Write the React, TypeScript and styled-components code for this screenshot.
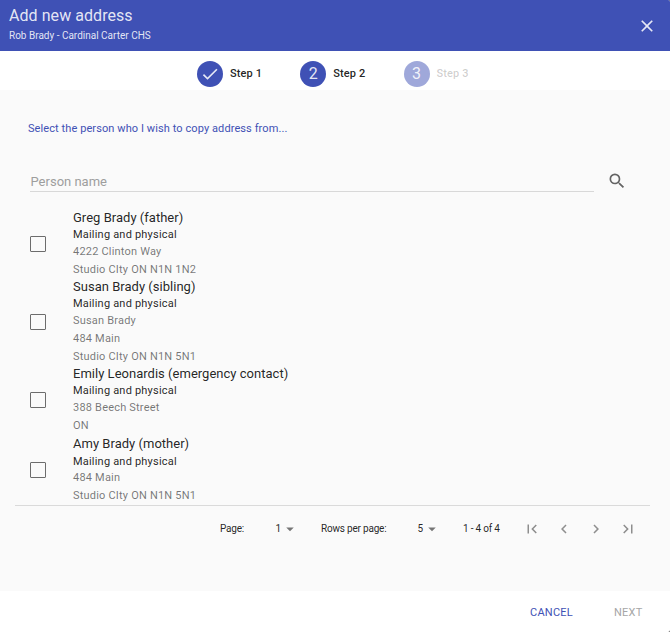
import React from "react";
import styled, { createGlobalStyle } from "styled-components";
import {
  MdArrowDropDown,
  MdCheck,
  MdChevronLeft,
  MdChevronRight,
  MdClose,
  MdFirstPage,
  MdLastPage,
  MdSearch,
} from "react-icons/md";

const indigo = "#3f51b5";

const GlobalStyle = createGlobalStyle`
  * { box-sizing: border-box; }
  body { margin: 0; background: #555; font-family: Roboto, sans-serif; color: rgba(0, 0, 0, 0.87); }
  button { font: inherit; letter-spacing: inherit; background: none; border: 0; padding: 0; color: inherit; }
  svg { display: block; flex: none; }
`;

const Dialog = styled.div`
  width: 670px;
  height: 632px;
  display: flex;
  flex-direction: column;
  overflow: hidden;
  background: #fff;
  border-radius: 0 2px 2px 0;
`;

const Header = styled.header`
  height: 51px;
  background: ${indigo};
  color: rgba(255, 255, 255, 0.87);
  display: flex;
  justify-content: space-between;
  align-items: center;
  padding: 0 13px 0 9px;
`;

const Titles = styled.div`
  height: 51px;
  padding-top: 6px;
`;

const Title = styled.h1`
  margin: 0;
  font-size: 16px;
  line-height: 20px;
  font-weight: 400;
  letter-spacing: 0.06px;
`;

const Subtitle = styled.div`
  margin-top: 3px;
  font-size: 10px;
  line-height: 13px;
`;

const CloseButton = styled.button`
  color: rgba(255, 255, 255, 0.87);
`;

const Steps = styled.nav`
  height: 39px;
  display: flex;
  align-items: center;
  padding: 6px 0 0 197px;
`;

const Step = styled.div<{ $muted?: boolean }>`
  width: 103.3px;
  display: flex;
  align-items: center;
  gap: 7px;
  font-size: 11px;
  font-weight: 500;
  letter-spacing: 0.1px;
  color: ${(p) => (p.$muted ? "rgba(0,0,0,0.2)" : "rgba(0,0,0,0.87)")};
`;

const StepBadge = styled.span<{ $muted?: boolean }>`
  width: 26px;
  height: 26px;
  border-radius: 50%;
  display: flex;
  align-items: center;
  justify-content: center;
  background: ${(p) => (p.$muted ? "#9fa8da" : indigo)};
  color: rgba(255, 255, 255, 0.87);
  font-size: 16px;
  font-weight: 400;
`;

const Content = styled.main`
  height: 501px;
  background: #fafafa;
  padding: 31px 20px 0 15px;
`;

const Prompt = styled.p`
  margin: 0 0 0 13px;
  font-size: 11px;
  line-height: 16px;
  letter-spacing: 0.09px;
  color: ${indigo};
`;

const SearchRow = styled.div`
  margin: 33px 23px 0 15px;
  display: flex;
  align-items: center;
  gap: 13px;
  color: rgba(0, 0, 0, 0.6);
`;

const SearchField = styled.input`
  flex: 1;
  height: 22px;
  padding: 2px 0 0 0.5px;
  border: 0;
  border-bottom: 1px solid #d8d8d8;
  background: none;
  outline: 0;
  font: 400 13px/19px Roboto, sans-serif;
  letter-spacing: 0;
  &::placeholder { color: #9e9e9e; }
`;

const People = styled.div`
  padding-top: 17px;
  height: 314px;
  border-bottom: 1px solid #dadada;
`;

const Name = styled.div`
  font-size: 13px;
  line-height: 17px;
  letter-spacing: 0.02px;
`;

const AddressKind = styled.div`
  font-size: 11px;
  line-height: 17px;
  letter-spacing: 0.2px;
`;

const AddressLine = styled.div`
  font-size: 11px;
  line-height: 17px;
  letter-spacing: 0.2px;
  color: rgba(0, 0, 0, 0.54);
  & + & { margin-top: 1px; }
`;

const Person = styled.label`
  display: flex;
  align-items: center;
  gap: 27px;
  padding-left: 15px;
  &:last-child { margin-top: 1px; }
  &:last-child ${AddressKind} { padding-top: 1px; margin-bottom: -1px; }
`;

const Checkbox = styled.input`
  appearance: none;
  width: 16px;
  height: 16px;
  margin: 0;
  border: 1px solid #6c6c6c;
  border-radius: 1px;
`;

const Pager = styled.div`
  height: 45px;
  display: flex;
  align-items: center;
  padding-left: 205px;
  font-size: 10px;
  letter-spacing: -0.2px;
`;

const PagerLabel = styled.span<{ $width: number }>`
  width: ${(p) => p.$width}px;
  white-space: nowrap;
`;

const PagerSelect = styled.button<{ $width: number }>`
  width: ${(p) => p.$width}px;
  display: flex;
  align-items: center;
  svg { color: #757575; }
`;

const PageButtons = styled.div`
  display: flex;
  gap: 14px;
  color: #8e8e8e;
`;

const Footer = styled.footer`
  flex: 1;
  display: flex;
  align-items: center;
  padding: 2px 0 0 530px;
  font-size: 11px;
  letter-spacing: 0.25px;
`;

const Action = styled.button<{ $primary?: boolean }>`
  width: 84px;
  flex: none;
  text-align: left;
  color: ${(p) => (p.$primary ? indigo : "#a6a6a6")};
`;

const people = [
  { name: "Greg Brady (father)", lines: ["4222 Clinton Way", "Studio CIty ON N1N 1N2"] },
  { name: "Susan Brady (sibling)", lines: ["Susan Brady", "484 Main", "Studio CIty ON N1N 5N1"] },
  { name: "Emily Leonardis (emergency contact)", lines: ["388 Beech Street", "ON"] },
  { name: "Amy Brady (mother)", lines: ["484 Main", "Studio CIty ON N1N 5N1"] },
];

export default function App() {
  return (
    <Dialog>
      <GlobalStyle />
      <Header>
        <Titles>
          <Title>Add new address</Title>
          <Subtitle>Rob Brady - Cardinal Carter CHS</Subtitle>
        </Titles>
        <CloseButton aria-label="Close"><MdClose size={20} /></CloseButton>
      </Header>
      <Steps>
        <Step><StepBadge><MdCheck size={20} /></StepBadge>Step 1</Step>
        <Step><StepBadge>2</StepBadge>Step 2</Step>
        <Step $muted><StepBadge $muted>3</StepBadge>Step 3</Step>
      </Steps>
      <Content>
        <Prompt>Select the person who I wish to copy address from...</Prompt>
        <SearchRow>
          <SearchField placeholder="Person name" />
          <MdSearch size={20} />
        </SearchRow>
        <People>
          {people.map((person) => (
            <Person key={person.name}>
              <Checkbox type="checkbox" />
              <div>
                <Name>{person.name}</Name>
                <AddressKind>Mailing and physical</AddressKind>
                {person.lines.map((line) => <AddressLine key={line}>{line}</AddressLine>)}
              </div>
            </Person>
          ))}
        </People>
        <Pager>
          <PagerLabel $width={55.5}>Page:</PagerLabel>
          <PagerSelect $width={45.5}>1<MdArrowDropDown size={18} /></PagerSelect>
          <PagerLabel $width={96.5}>Rows per page:</PagerLabel>
          <PagerSelect $width={45.5}>5<MdArrowDropDown size={18} /></PagerSelect>
          <PagerLabel $width={60}>1 - 4 of 4</PagerLabel>
          <PageButtons>
            <MdFirstPage size={18} />
            <MdChevronLeft size={18} />
            <MdChevronRight size={18} />
            <MdLastPage size={18} />
          </PageButtons>
        </Pager>
      </Content>
      <Footer>
        <Action $primary>CANCEL</Action>
        <Action>NEXT</Action>
      </Footer>
    </Dialog>
  );
}
